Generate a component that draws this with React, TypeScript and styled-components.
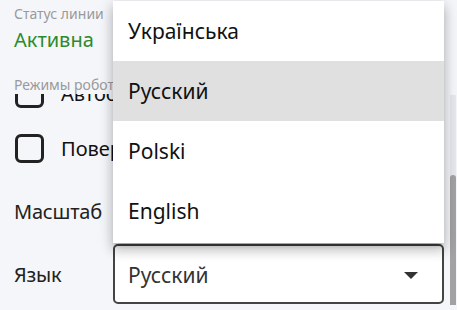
import React from 'react';
import styled, { createGlobalStyle } from 'styled-components';

const languages = ['Українська', 'Русский', 'Polski', 'English'];
const current = 'Русский';

const App: React.FC = () => {
  return (
    <>
      <GlobalStyle />
      <Panel>
        <Header>
          <Caption>Статус линии</Caption>
          <Status>Активна</Status>
          <Caption>Режимы роботы</Caption>
        </Header>

        <Body>
          <Content>
            <CheckRow>
              <CheckBox />
              <CheckLabel>Автоответ</CheckLabel>
            </CheckRow>
            <CheckRow>
              <CheckBox />
              <CheckLabel>Поверх окон</CheckLabel>
            </CheckRow>
            <FieldRow>
              <FieldLabel>Масштаб</FieldLabel>
              <Select>
                <SelectValue />
                <Arrow />
              </Select>
            </FieldRow>
            <FieldRow>
              <FieldLabel>Язык</FieldLabel>
              <Select>
                <SelectValue>{current}</SelectValue>
                <Arrow />
              </Select>
            </FieldRow>
          </Content>
          <Track>
            <Thumb />
          </Track>
        </Body>

        <Menu>
          {languages.map((lang) => (
            <MenuItem key={lang} $selected={lang === current}>
              {lang}
            </MenuItem>
          ))}
        </Menu>
      </Panel>
    </>
  );
};

const Arrow: React.FC = () => (
  <svg width="14" height="7" viewBox="0 0 14 7">
    <path d="M0 0h14L7 7z" fill="#333333" />
  </svg>
);

const GlobalStyle = createGlobalStyle`
  body {
    margin: 0;
    background: #f5f6fa;
    font-family: 'Noto Sans', 'Open Sans', sans-serif;
  }
`;

const Panel = styled.div`
  position: relative;
  height: 310px;
  display: flex;
  flex-direction: column;
  overflow: hidden;
`;

const Header = styled.div`
  height: 94px;
  padding: 4px 0 0 14px;
  box-sizing: border-box;
  display: flex;
  flex-direction: column;
  flex-shrink: 0;
`;

const Caption = styled.div`
  font-size: 14px;
  line-height: 19px;
  color: #9a9a9a;
  white-space: nowrap;
`;

const Status = styled.div`
  font-size: 20px;
  line-height: 26px;
  color: #2e8a2e;
  margin: 4px 0 22px;
`;

const Body = styled.div`
  flex: 1;
  display: flex;
  min-height: 0;
`;

const Content = styled.div`
  flex: 1;
  display: flex;
  flex-direction: column;
  justify-content: flex-end;
  overflow: hidden;
  padding: 0 6px 6px 14px;
`;

const CheckRow = styled.div`
  height: 55px;
  flex-shrink: 0;
  display: flex;
  align-items: center;
  gap: 17px;
  padding: 0 0 4px 1px;
  box-sizing: border-box;
`;

const CheckBox = styled.div`
  width: 29px;
  height: 29px;
  border: 3px solid #222222;
  border-radius: 6px;
  box-sizing: border-box;
  flex-shrink: 0;
`;

const CheckLabel = styled.span`
  font-size: 20px;
  color: #111111;
  white-space: nowrap;
`;

const FieldRow = styled.div`
  height: 60px;
  flex-shrink: 0;
  margin-top: 3px;
  display: flex;
  align-items: center;
`;

const FieldLabel = styled.span`
  width: 99px;
  flex-shrink: 0;
  font-size: 20px;
  letter-spacing: -0.2px;
  color: #222222;
`;

const Select = styled.div`
  flex: 1;
  height: 60px;
  box-sizing: border-box;
  border: 2px solid #444444;
  border-radius: 5px;
  background: #ffffff;
  display: flex;
  align-items: center;
  justify-content: space-between;
  padding: 2px 24px 0 13px;
`;

const SelectValue = styled.span`
  font-size: 21px;
  color: #333333;
`;

const Track = styled.div`
  width: 6px;
  margin: 1px 1px 5px 0;
  background: #e7e8ed;
  display: flex;
  flex-direction: column;
  justify-content: flex-end;
`;

const Thumb = styled.div`
  height: 130px;
  background: #a2a2a2;
  border-radius: 3px 3px 0 0;
`;

const Menu = styled.ul`
  position: absolute;
  top: 1px;
  left: 113px;
  width: 331px;
  margin: 0;
  padding: 0 0 2px;
  list-style: none;
  background: #ffffff;
  box-shadow: 0 5px 5px -3px rgba(0, 0, 0, 0.2), 0 8px 10px 1px rgba(0, 0, 0, 0.14),
    0 3px 14px 2px rgba(0, 0, 0, 0.12);
`;

const MenuItem = styled.li<{ $selected?: boolean }>`
  height: 60px;
  display: flex;
  align-items: center;
  padding-left: 15px;
  font-size: 21px;
  color: #111111;
  background: ${(p) => (p.$selected ? '#e0e0e0' : 'transparent')};
`;

export default App;
